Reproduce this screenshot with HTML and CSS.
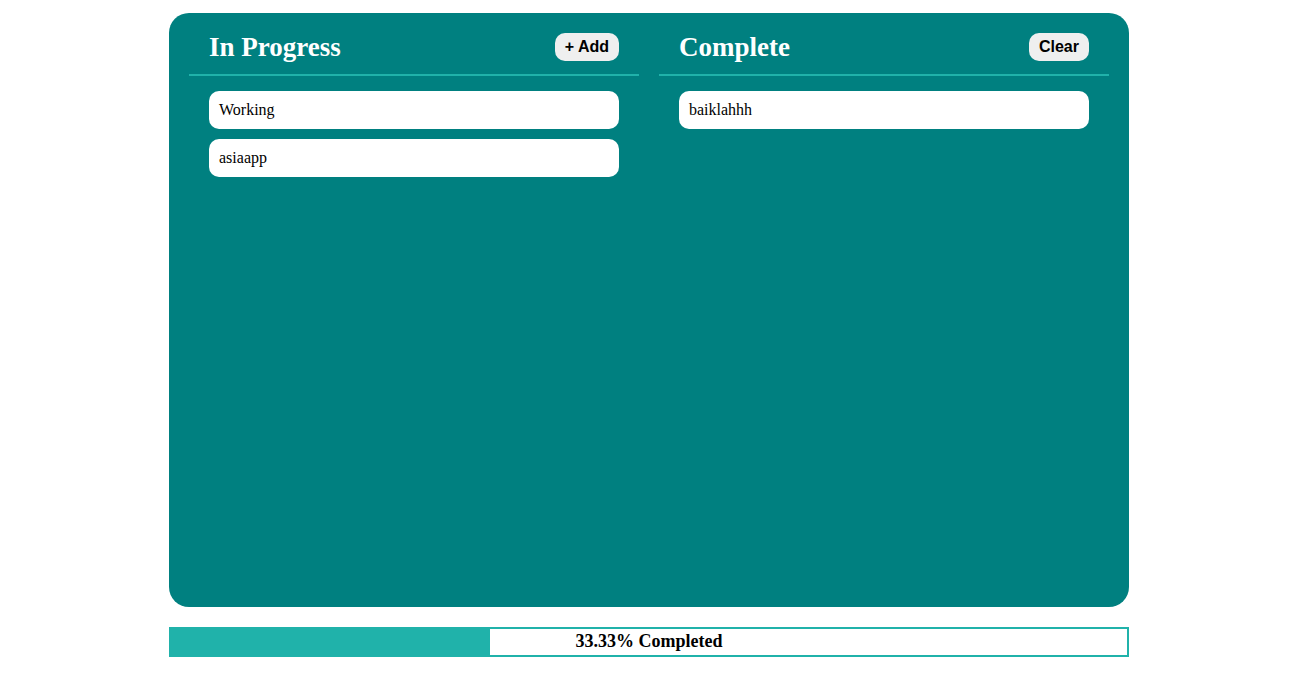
FILE: index.html
```html
<!DOCTYPE html>
<html>
<head>
<meta charset="utf-8">
<link rel="stylesheet" href="styles.css">
</head>
<body>
<div class="app">
  <div class="board">
    <section class="column">
      <div class="column-header">
        <h2 class="column-title">In Progress</h2>
        <button class="btn">+ Add</button>
      </div>
      <div class="card-list">
        <div class="card">Working</div>
        <div class="card">asiaapp</div>
      </div>
    </section>
    <section class="column">
      <div class="column-header">
        <h2 class="column-title">Complete</h2>
        <button class="btn">Clear</button>
      </div>
      <div class="card-list">
        <div class="card">baiklahhh</div>
      </div>
    </section>
  </div>
  <div class="progress">
    <div class="progress-fill" style="width: 33.33%"></div>
    <div class="progress-label">33.33% Completed</div>
  </div>
</div>
</body>
</html>
```

FILE: styles.css
```css
html, body {
  margin: 0;
  padding: 0;
  background: #ffffff;
  font-family: "Liberation Serif", "Times New Roman", serif;
}

.app {
  width: 960px;
  margin: 0 0 0 169px;
  padding-top: 13px;
}

.board {
  box-sizing: border-box;
  height: 594px;
  background: #008080;
  border-radius: 20px;
  padding: 20px;
  display: flex;
  gap: 20px;
}

.column {
  flex: 1;
  display: flex;
  flex-direction: column;
}

.column-header {
  display: flex;
  align-items: center;
  justify-content: space-between;
  padding: 0 20px 13px 20px;
  border-bottom: 2px solid #20b2aa;
}

.column-title {
  margin: 0;
  font-size: 27px;
  font-weight: bold;
  color: #ffffff;
  line-height: 28px;
}

.btn {
  font-family: "Liberation Sans", Arial, sans-serif;
  font-size: 16px;
  font-weight: bold;
  color: #000000;
  background: #efefef;
  border: none;
  border-radius: 10px;
  padding: 5px 10px;
  line-height: 18px;
}

.card-list {
  display: flex;
  flex-direction: column;
  gap: 10px;
  padding: 15px 20px 0 20px;
}

.card {
  background: #ffffff;
  border-radius: 10px;
  padding: 10px;
  font-size: 16px;
  line-height: 18px;
  color: #000000;
}

.progress {
  position: relative;
  box-sizing: border-box;
  margin-top: 20px;
  height: 30px;
  border: 2px solid #20b2aa;
  background: #ffffff;
}

.progress-fill {
  height: 100%;
  background: #20b2aa;
}

.progress-label {
  position: absolute;
  inset: 0;
  display: flex;
  align-items: center;
  justify-content: center;
  font-size: 18px;
  font-weight: bold;
  color: #000000;
  padding-bottom: 1px;
}
```
